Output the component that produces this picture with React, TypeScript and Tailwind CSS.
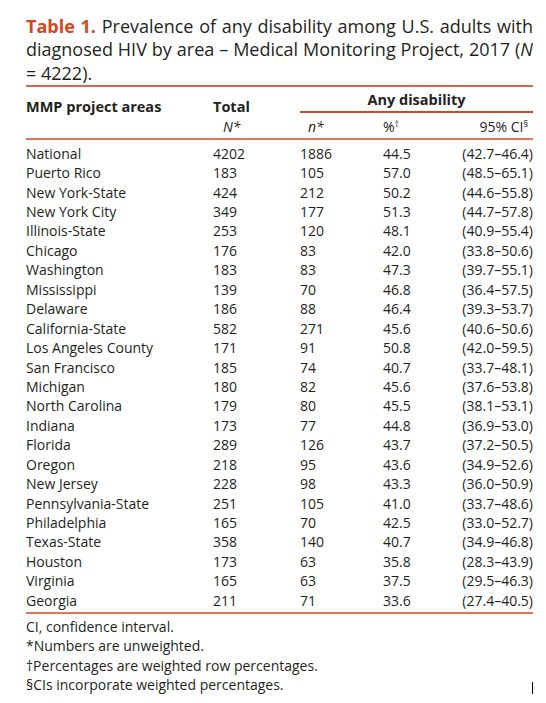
const rows: [string, string, string, string, string][] = [
  ['National', '4202', '1886', '44.5', '(42.7–46.4)'],
  ['Puerto Rico', '183', '105', '57.0', '(48.5–65.1)'],
  ['New York-State', '424', '212', '50.2', '(44.6–55.8)'],
  ['New York City', '349', '177', '51.3', '(44.7–57.8)'],
  ['Illinois-State', '253', '120', '48.1', '(40.9–55.4)'],
  ['Chicago', '176', '83', '42.0', '(33.8–50.6)'],
  ['Washington', '183', '83', '47.3', '(39.7–55.1)'],
  ['Mississippi', '139', '70', '46.8', '(36.4–57.5)'],
  ['Delaware', '186', '88', '46.4', '(39.3–53.7)'],
  ['California-State', '582', '271', '45.6', '(40.6–50.6)'],
  ['Los Angeles County', '171', '91', '50.8', '(42.0–59.5)'],
  ['San Francisco', '185', '74', '40.7', '(33.7–48.1)'],
  ['Michigan', '180', '82', '45.6', '(37.6–53.8)'],
  ['North Carolina', '179', '80', '45.5', '(38.1–53.1)'],
  ['Indiana', '173', '77', '44.8', '(36.9–53.0)'],
  ['Florida', '289', '126', '43.7', '(37.2–50.5)'],
  ['Oregon', '218', '95', '43.6', '(34.9–52.6)'],
  ['New Jersey', '228', '98', '43.3', '(36.0–50.9)'],
  ['Pennsylvania-State', '251', '105', '41.0', '(33.7–48.6)'],
  ['Philadelphia', '165', '70', '42.5', '(33.0–52.7)'],
  ['Texas-State', '358', '140', '40.7', '(34.9–46.8)'],
  ['Houston', '173', '63', '35.8', '(28.3–43.9)'],
  ['Virginia', '165', '63', '37.5', '(29.5–46.3)'],
  ['Georgia', '211', '71', '33.6', '(27.4–40.5)'],
];

const cols = 'grid grid-cols-[187px_87px_83px_78px_72px]';

export default function App() {
  return (
    <div className="min-h-[703px] w-[546px] bg-white text-[#231f20] font-['Open_Sans','Noto_Sans',sans-serif]">
      <div className="ml-[26px] w-[507px] overflow-hidden pt-[15px]">
        {/* caption */}
        <div className="text-[18px] leading-[23.4px]">
          <p className="text-justify [text-align-last:justify] whitespace-nowrap">
            <span className="font-bold text-[#d4471f]">Table 1.</span> Prevalence of any disability among U.S. adults with
          </p>
          <p className="text-justify [text-align-last:justify] whitespace-nowrap">
            diagnosed HIV by area – Medical Monitoring Project, 2017 (<i>N</i>
          </p>
          <p>= 4222).</p>
        </div>

        <div className="h-[2px] bg-[#dd6443]" />

        {/* header */}
        <div className="text-[14px] leading-[19px]">
          <div className={cols}>
            <div className="pt-[9.5px] text-[14.5px] font-bold">MMP project areas</div>
            <div className="pt-[9.5px] text-[14.5px] font-bold">Total</div>
            <div className="col-span-3 pt-[2.5px]">
              <div className="text-center text-[14.5px] font-bold">Any disability</div>
              <div className="mt-[2.5px] h-[2px] bg-[#cc4a22]" />
            </div>
          </div>
          <div className={`${cols} h-[22.5px] pt-[1px]`}>
            <div />
            <div className="pl-[10px] italic">N*</div>
            <div className="pl-[8px] italic">n*</div>
            <div>
              %<span className="relative -top-[5px] text-[9px] leading-none">†</span>
            </div>
            <div className="pr-[5px] text-right whitespace-nowrap">
              95% CI<span className="relative -top-[5px] text-[9px] leading-none">§</span>
            </div>
          </div>
        </div>

        <div className="h-[2px] bg-[#e0775a]" />

        {/* body */}
        <div className="pt-[3.5px] text-[14px] leading-[19.43px]">
          {rows.map((r) => (
            <div key={r[0]} className={cols}>
              <div className="whitespace-nowrap">{r[0]}</div>
              <div>{r[1]}</div>
              <div>{r[2]}</div>
              <div>{r[3]}</div>
              <div className="flex justify-end whitespace-nowrap">{r[4]}</div>
            </div>
          ))}
        </div>

        <div className="mt-[1.5px] h-[2px] bg-[#e0775a]" />

        {/* notes */}
        <div className="pt-[3px] text-[14px] leading-[19.4px]">
          <p>CI, confidence interval.</p>
          <p>*Numbers are unweighted.</p>
          <p>†Percentages are weighted row percentages.</p>
          <div className="flex items-end justify-between">
            <p>§CIs incorporate weighted percentages.</p>
            <div className="mb-[-2px] h-[14px] w-[1px] bg-black" />
          </div>
        </div>
      </div>
    </div>
  );
}
